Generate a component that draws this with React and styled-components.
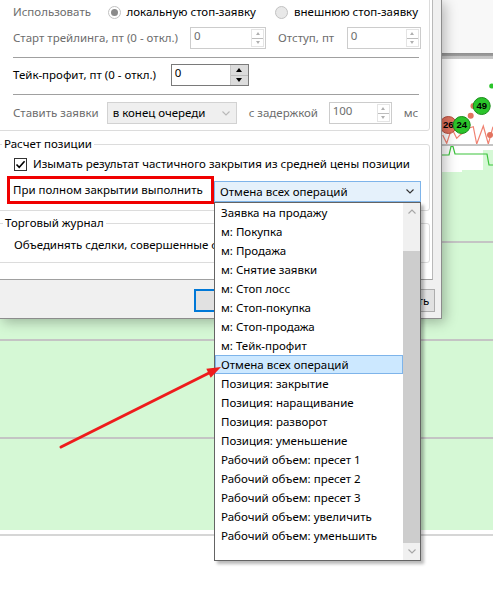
import React from 'react';
import styled, { createGlobalStyle } from 'styled-components';

const Global = createGlobalStyle`
  html, body { margin: 0; padding: 0; }
  body { background: #fff; overflow: hidden; }
`;

const Screen = styled.div`
  position: relative;
  width: 493px;
  height: 613px;
  overflow: hidden;
  background: #fff;
  font-family: "Noto Sans", "Segoe UI", sans-serif;
  font-size: 11.5px;
  color: #000;
`;

/* ---------- background chart ---------- */
const Chart = styled.div`
  display: flex;
  flex-direction: column;
  height: 100%;
`;
const TopPane = styled.div`
  height: 53px;
  background: #f8f8f8;
`;
const Splitter = styled.div`
  height: 6px;
  background: linear-gradient(#8f8f8f, #9c9c9c 45%, #c2c2c2 55%, #c9c9c9);
`;
const PricePane = styled.div`
  height: 85px;
  background: #fff;
`;
const PaneLine = styled.div`
  height: 2px;
  background: #c4c4c4;
`;
const GreenPane = styled.div`
  height: ${p => p.h}px;
  background: #d5f8d5;
`;
const WhiteGap = styled.div`
  height: ${p => p.h}px;
  background: #fff;
`;
const LightLine = styled.div`
  height: 2px;
  background: #d6d6d6;
`;
const PaneSvg = styled.svg`
  display: block;
`;

/* ---------- dialog ---------- */
const Dialog = styled.div`
  position: absolute;
  left: 0;
  top: 0;
  width: 442px;
  height: 319px;
  box-sizing: border-box;
  background: #f0f0f0;
  border-right: 1px solid #8c8c8c;
  border-bottom: 1px solid #8c8c8c;
  box-shadow: 3px 3px 12px rgba(0, 0, 0, 0.28);
  display: flex;
  flex-direction: column;
`;
const Panel = styled.div`
  width: 433px;
  height: 280px;
  box-sizing: border-box;
  background: #fff;
  border-right: 1px solid #b9b9b9;
  border-bottom: 1px solid #a0a0a0;
  display: flex;
  flex-direction: column;
`;
const Footer = styled.div`
  flex: 1;
  display: flex;
  justify-content: flex-end;
  align-items: flex-start;
  gap: 8px;
  padding: 9px 6px 0 0;
`;
const Button = styled.button`
  width: 75px;
  height: 23px;
  box-sizing: border-box;
  font: inherit;
  color: #000;
  background: #e1e1e1;
  border: 1px solid ${p => (p.primary ? '#0078d7' : '#adadad')};
  box-shadow: ${p => (p.primary ? 'inset 0 0 0 1px #0078d7' : 'none')};
  padding: 0;
`;

const TopGroup = styled.div`
  width: 433px;
  box-sizing: border-box;
  margin: -20px 0 0 -3px;
  padding: 20px 10px 6px 15px;
  border: 1px solid #dcdcdc;
  border-radius: 3px;
  display: flex;
  flex-direction: column;
`;
const Group = styled.fieldset`
  width: 433px;
  box-sizing: border-box;
  margin: ${p => p.mt}px 0 0 -3px;
  padding: 0 0 ${p => p.pb}px 0;
  border: 1px solid #dcdcdc;
  border-radius: 3px;
  min-width: 0;
`;
const Legend = styled.legend`
  margin-left: ${p => p.ml}px;
  padding: 0 2px;
  line-height: 16px;
  color: #000;
`;
const Row = styled.div`
  display: flex;
  align-items: ${p => p.align || 'center'};
  height: ${p => p.h}px;
  margin-top: ${p => p.mt || 0}px;
  margin-left: ${p => p.ml || 0}px;
  flex-shrink: 0;
`;
const Divider = styled.div`
  height: 1px;
  background: #a0a0a0;
  margin-top: ${p => p.mt}px;
  flex-shrink: 0;
`;
const Label = styled.span`
  flex: 0 0 auto;
  width: ${p => (p.w ? `${p.w}px` : 'auto')};
  margin-left: ${p => p.ml || 0}px;
  color: ${p => (p.disabled ? '#6d6d6d' : '#000')};
  line-height: 16px;
  white-space: nowrap;
`;

const RadioOption = styled.label`
  flex: 0 0 auto;
  width: ${p => (p.w ? `${p.w}px` : 'auto')};
  display: flex;
  align-items: center;
  gap: 6px;
  line-height: 16px;
  white-space: nowrap;
`;
const RadioCircle = styled.span`
  width: 13px;
  height: 13px;
  box-sizing: border-box;
  border-radius: 50%;
  border: 1px solid #c2c2c2;
  background: ${p => (p.checked ? '#fff' : '#e8e8e8')};
  display: flex;
  align-items: center;
  justify-content: center;
  &::after {
    content: '';
    display: ${p => (p.checked ? 'block' : 'none')};
    width: 7px;
    height: 7px;
    border-radius: 50%;
    background: #8a8a8a;
  }
`;

const SpinBox = styled.div`
  flex: 0 0 auto;
  width: ${p => p.w}px;
  height: ${p => p.h || 22}px;
  box-sizing: border-box;
  border: 1px solid ${p => (p.disabled ? '#cccccc' : '#7a7a7a')};
  background: #fff;
  display: flex;
`;
const SpinValue = styled.span`
  flex: 1;
  padding: 0 3px;
  line-height: 16px;
  color: ${p => (p.disabled ? '#6d6d6d' : '#000')};
`;
const SpinButtons = styled.div`
  display: flex;
  flex-direction: column;
  width: ${p => (p.disabled ? 11 : 17)}px;
  margin: ${p => (p.disabled ? '1px 1px 1px 0' : '0')};
  border: 1px solid ${p => (p.disabled ? '#e4e4e4' : '#c8c8c8')};
  border-width: ${p => (p.disabled ? '1px' : '0 0 0 1px')};
  background: ${p => (p.disabled ? '#fff' : '#dcdcdc')};
`;
const SpinHalf = styled.div`
  flex: 1;
  display: flex;
  align-items: center;
  justify-content: center;
  & + & {
    border-top: 1px solid ${p => (p.disabled ? '#ececec' : '#bdbdbd')};
  }
`;
const Tri = styled.span`
  width: 0;
  height: 0;
  border-left: ${p => (p.big ? 3 : 2.5)}px solid transparent;
  border-right: ${p => (p.big ? 3 : 2.5)}px solid transparent;
  ${p => (p.down ? 'border-top' : 'border-bottom')}: ${p => (p.big ? 4 : 3)}px solid ${p => (p.big ? '#000' : '#b0b0b0')};
`;

const ComboBox = styled.div`
  flex: 0 0 auto;
  width: ${p => p.w}px;
  height: ${p => p.h}px;
  box-sizing: border-box;
  border: 1px solid ${p => (p.open ? '#7eb4ea' : '#d2d2d2')};
  background: ${p => (p.open ? '#e5f1fb' : '#efefef')};
  display: flex;
  align-items: center;
  padding: 0 6px 0 5px;
  position: relative;
  margin-bottom: ${p => p.mb || 0}px;
`;
const ComboText = styled.span`
  flex: 1;
  line-height: 16px;
  white-space: nowrap;
`;

const CheckBox = styled.span`
  width: 13px;
  height: 13px;
  box-sizing: border-box;
  border: 1px solid #333;
  background: #fff;
  display: flex;
  align-items: center;
  justify-content: center;
  margin-right: 6px;
`;

const Highlight = styled.div`
  flex: 0 0 auto;
  width: 207px;
  height: 28px;
  box-sizing: border-box;
  border: 3px solid #f00000;
  padding-left: 3px;
  display: flex;
  align-items: center;
  line-height: 16px;
  white-space: nowrap;
`;

/* ---------- dropdown list ---------- */
const ListBox = styled.div`
  position: absolute;
  left: -1px;
  top: calc(100% + 1px);
  width: 207px;
  height: 359px;
  box-sizing: border-box;
  border: 1px solid #646464;
  background: #fff;
  box-shadow: 3px 3px 3px rgba(0, 0, 0, 0.28);
  display: flex;
  z-index: 10;
`;
const Items = styled.ul`
  list-style: none;
  margin: 0;
  padding: 0;
  flex: 1;
  min-width: 0;
`;
const Item = styled.li`
  height: 19px;
  box-sizing: border-box;
  padding-left: 5px;
  line-height: 17px;
  white-space: nowrap;
  border: 1px solid ${p => (p.active ? '#7eb4ea' : 'transparent')};
  background: ${p => (p.active ? '#cce8ff' : 'transparent')};
`;
const ScrollBar = styled.div`
  width: 17px;
  background: #f0f0f0;
  display: flex;
  flex-direction: column;
`;
const ScrollBtn = styled.div`
  height: 17px;
  display: flex;
  align-items: center;
  justify-content: center;
`;
const ScrollTrack = styled.div`
  height: ${p => p.h}px;
  background: ${p => (p.thumb ? '#cdcdcd' : 'transparent')};
`;

const Overlay = styled.svg`
  position: absolute;
  left: 0;
  top: 0;
  pointer-events: none;
  z-index: 20;
`;

const Chevron = ({ color, down = true, w = 8 }) => (
  <svg width={w} height="5" viewBox="0 0 8 5">
    <path d={down ? 'M0.5 0.5 L4 4 L7.5 0.5' : 'M0.5 4.5 L4 1 L7.5 4.5'} fill="none" stroke={color} strokeWidth="1.1" />
  </svg>
);

const Spin = ({ w, value, disabled }) => (
  <SpinBox w={w} disabled={disabled}>
    <SpinValue disabled={disabled}>{value}</SpinValue>
    <SpinButtons disabled={disabled}>
      <SpinHalf disabled={disabled}><Tri big={!disabled} /></SpinHalf>
      <SpinHalf disabled={disabled}><Tri big={!disabled} down /></SpinHalf>
    </SpinButtons>
  </SpinBox>
);

const items = [
  'Заявка на продажу',
  'м: Покупка',
  'м: Продажа',
  'м: Снятие заявки',
  'м: Стоп лосс',
  'м: Стоп-покупка',
  'м: Стоп-продажа',
  'м: Тейк-профит',
  'Отмена всех операций',
  'Позиция: закрытие',
  'Позиция: наращивание',
  'Позиция: разворот',
  'Позиция: уменьшение',
  'Рабочий объем: пресет 1',
  'Рабочий объем: пресет 2',
  'Рабочий объем: пресет 3',
  'Рабочий объем: увеличить',
  'Рабочий объем: уменьшить',
];

const Bubble = ({ x, y, r = 8.5, green, label }) => (
  <g>
    <circle cx={x} cy={y} r={r} fill={green ? '#2bc42b' : '#e2735f'} stroke={green ? '#1a8c1a' : '#b9503f'} strokeWidth="1" />
    {label && (
      <text x={x} y={y + 3.2} textAnchor="middle" fontFamily="Liberation Sans, Arial, sans-serif" fontWeight="bold" fontSize="9.5" fill="#000">
        {label}
      </text>
    )}
  </g>
);

export default function App() {
  return (
    <Screen>
      <Global />
      <Chart>
        <TopPane />
        <Splitter />
        <PricePane>
          <PaneSvg width="493" height="85" viewBox="0 59 493 85">
            <polyline
              points="442.7,135 446.7,143.3 451.7,128.3 456.7,138.3 460,135 465,131.7 468.3,128.3 473.3,126.7 476.7,144 483.3,126 488.3,144 493,126.7"
              fill="none"
              stroke="#f08272"
              strokeWidth="1.2"
            />
            <circle cx="491.7" cy="86" r="2.5" fill="#2bc42b" />
            <circle cx="473.5" cy="106" r="3" fill="#e2735f" />
            <circle cx="470.7" cy="115.7" r="3" fill="#e2735f" />
            <circle cx="490" cy="135" r="3" fill="#e2735f" />
            <Bubble x={481.7} y={106} green label="49" />
            <Bubble x={448.3} y={125} label="26" />
            <Bubble x={461.7} y={125} green label="24" />
          </PaneSvg>
        </PricePane>
        <PaneLine />
        <GreenPane h={95}>
          <PaneSvg width="493" height="95" viewBox="0 146 493 95">
            <polygon points="442,146 493,146 493,150 483,150 483,170 462,170 462,172 442,172" fill="#fff" />
            <polyline
              points="442,155 449,155 451,146.5 453,146.5 455,154 483,154 485,154 487,154 489,165 493,165"
              fill="none"
              stroke="#3cc43c"
              strokeWidth="1.2"
            />
          </PaneSvg>
        </GreenPane>
        <PaneLine />
        <GreenPane h={96} />
        <PaneLine />
        <GreenPane h={96} />
        <PaneLine />
        <GreenPane h={91} />
        <WhiteGap h={4} />
        <LightLine />
      </Chart>

      <Dialog>
        <Panel>
          <TopGroup>
            <Row h={22}>
              <Label w={94.5} disabled>Использовать</Label>
              <RadioOption w={167.5}>
                <RadioCircle checked />
                <span>локальную стоп-заявку</span>
              </RadioOption>
              <RadioOption>
                <RadioCircle />
                <span>внешнюю стоп-заявку</span>
              </RadioOption>
            </Row>
            <Row h={22} mt={4}>
              <Label w={177} disabled>Старт трейлинга, пт (0 - откл.)</Label>
              <Spin w={76} value="0" disabled />
              <Label w={68.7} ml={12} disabled>Отступ, пт</Label>
              <Spin w={74} value="0" disabled />
            </Row>
            <Divider mt={8} />
            <Row h={22} mt={6}>
              <Label w={157.7}>Тейк-профит, пт (0 - откл.)</Label>
              <Spin w={78} value="0" />
            </Row>
            <Divider mt={8} />
            <Row h={22} mt={7}>
              <Label w={93.7} disabled>Ставить заявки</Label>
              <ComboBox w={130} h={22}>
                <ComboText>в конец очереди</ComboText>
                <Chevron color="#b8b8b8" w={8} />
              </ComboBox>
              <Label w={80} ml={12} disabled>с задержкой</Label>
              <Spin w={63} value="100" disabled />
              <Label ml={12} disabled>мс</Label>
            </Row>
          </TopGroup>

          <Group mt={5} pb={6}>
            <Legend ml={4}>Расчет позиции</Legend>
            <Row h={14} mt={5} ml={16}>
              <CheckBox>
                <svg width="11" height="11" viewBox="0 0 11 11">
                  <path d="M1.5 5.5 L4.2 8.3 L9.6 2.2" fill="none" stroke="#000" strokeWidth="1.6" />
                </svg>
              </CheckBox>
              <Label>Изымать результат частичного закрытия из средней цены позиции</Label>
            </Row>
            <Row h={28} mt={5} ml={9} align="flex-end">
              <Highlight>При полном закрытии выполнить</Highlight>
              <ComboBox w={207} h={21} open mb={2}>
                <ComboText>Отмена всех операций</ComboText>
                <Chevron color="#333" w={8} />
                <ListBox>
                  <Items>
                    {items.map(t => (
                      <Item key={t} active={t === 'Отмена всех операций'}>{t}</Item>
                    ))}
                  </Items>
                  <ScrollBar>
                    <ScrollBtn><Chevron color="#a6a6a6" down={false} /></ScrollBtn>
                    <ScrollTrack h={31} />
                    <ScrollTrack h={292} thumb />
                    <ScrollBtn><Chevron color="#a6a6a6" /></ScrollBtn>
                  </ScrollBar>
                </ListBox>
              </ComboBox>
            </Row>
          </Group>

          <Group mt={4} pb={8}>
            <Legend ml={5}>Торговый журнал</Legend>
            <Row h={18} mt={5} ml={16}>
              <Label>Объединять сделки, совершенные с</Label>
            </Row>
          </Group>
        </Panel>
        <Footer>
          <Button primary />
          <Button />
          <Button>Применить</Button>
        </Footer>
      </Dialog>

      <Overlay width="493" height="613" viewBox="0 0 493 613">
        <line x1="61" y1="447" x2="210" y2="372.5" stroke="#ee1c1c" strokeWidth="3" strokeLinecap="round" />
        <polygon points="221,367 206.3,368.8 210.7,377.8" fill="#ee1c1c" />
      </Overlay>
    </Screen>
  );
}
